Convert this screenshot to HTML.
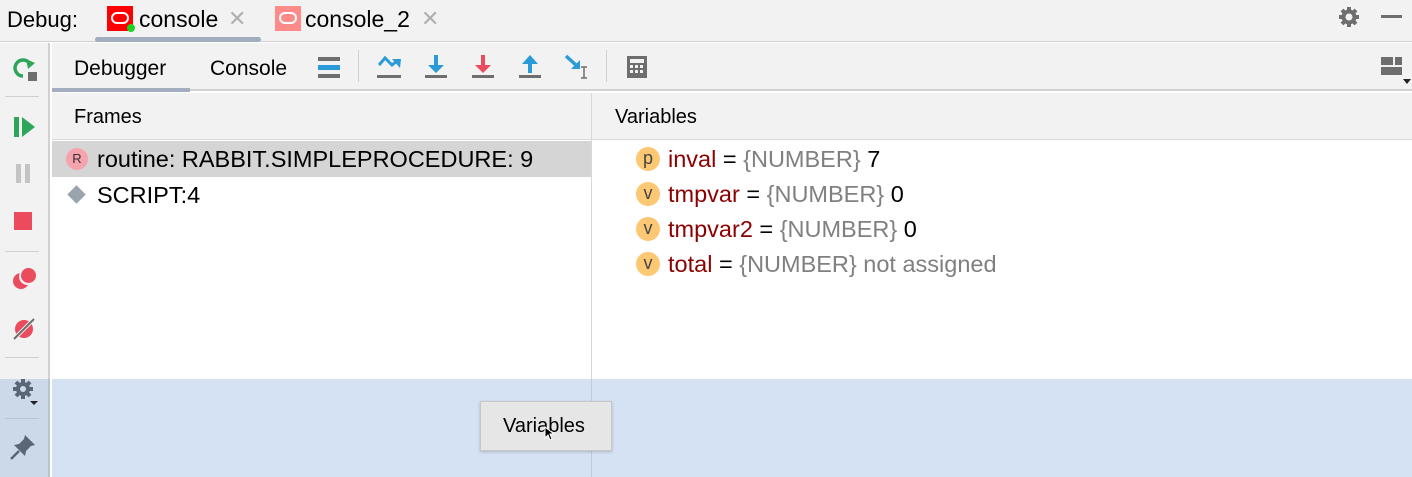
<!DOCTYPE html>
<html><head><style>
*{margin:0;padding:0;box-sizing:border-box}
body{width:1412px;height:477px;overflow:hidden;background:#fff;font-family:"Liberation Sans",sans-serif;position:relative;color:#000}
.a{position:absolute}
.t{font-size:22px;white-space:nowrap}
.v{font-size:23.5px}
</style></head><body>
<div class="a" style="left:0;top:0;width:1412px;height:42px;background:#f2f2f2;border-bottom:1px solid #d0d0d0"></div>
<div class="a t" style="left:7px;top:7px">Debug:</div>
<div class="a" style="left:107px;top:6px;width:26px;height:25px;background:#f00"></div>
<div class="a" style="left:111px;top:12px;width:18px;height:12px;border:2.5px solid #fff;border-radius:6px"></div>
<div class="a" style="left:127px;top:24px;width:8px;height:8px;background:#1ed31e;border-radius:50%"></div>
<div class="a t" style="left:139px;top:6px;font-size:23px">console</div>
<div class="a t" style="left:228px;top:6px;color:#b0b0b0">✕</div>
<div class="a" style="top:37px;height:5px;background:#a2adbf;border-radius:3px;left:95px;width:166px"></div>
<div class="a" style="left:275px;top:6px;width:26px;height:25px;background:#ff8a8a"></div>
<div class="a" style="left:279px;top:12px;width:18px;height:12px;border:2.5px solid #fff;border-radius:6px"></div>
<div class="a t" style="left:305px;top:6px;font-size:23px">console_2</div>
<div class="a t" style="left:421px;top:6px;color:#b0b0b0">✕</div>
<svg class="a" style="left:1337px;top:5px" width="24" height="24" viewBox="0 0 24 24"><g fill="#6e6e6e"><circle cx="12" cy="12" r="7.5"/><g stroke="#6e6e6e" stroke-width="4"><line x1="12" y1="2" x2="12" y2="22"/><line x1="2" y1="12" x2="22" y2="12"/><line x1="5" y1="5" x2="19" y2="19"/><line x1="19" y1="5" x2="5" y2="19"/></g></g><circle cx="12" cy="12" r="3.5" fill="#f2f2f2"/></svg>
<div class="a" style="left:1381px;top:15px;width:21px;height:3px;background:#6e6e6e"></div>
<div class="a" style="left:0;top:43px;width:50px;height:434px;background:#f2f2f2;border-right:2px solid #d0d0d0"></div>
<div class="a" style="left:0;top:379px;width:50px;height:98px;background:#cbd9e8;border-right:2px solid #b8c4d2"></div>
<svg class="a" style="left:10px;top:54px" width="30" height="30" viewBox="0 0 30 30"><path d="M13 22 A8 8 0 1 1 20 10" fill="none" stroke="#2fa55a" stroke-width="3.5"/><path d="M16 5 L25 9 L18 15Z" fill="#2fa55a"/><rect x="18" y="18" width="9" height="9" fill="#6e6e6e"/></svg>
<div class="a" style="left:5px;top:96px;width:34px;height:1px;background:#d0d0d0"></div>
<svg class="a" style="left:12px;top:115px" width="26" height="24"><rect x="2" y="2" width="5" height="20" fill="#2fa55a"/><path d="M10 2 L23 12 L10 22Z" fill="#2fa55a"/></svg>
<div class="a" style="left:16px;top:164px;width:5px;height:19px;background:#c4c4c4"></div><div class="a" style="left:25px;top:164px;width:5px;height:19px;background:#c4c4c4"></div>
<div class="a" style="left:14px;top:212px;width:18px;height:18px;background:#eb4b5c"></div>
<div class="a" style="left:5px;top:251px;width:34px;height:1px;background:#d0d0d0"></div>
<div class="a" style="left:13px;top:273px;width:16px;height:16px;background:#eb4b5c;border-radius:50%"></div><div class="a" style="left:21px;top:268px;width:15px;height:15px;background:#eb4b5c;border-radius:50%;box-shadow:-1px 1px 0 1px #f2f2f2"></div>
<svg class="a" style="left:11px;top:316px" width="26" height="26"><circle cx="13" cy="13" r="9" fill="#eb4b5c"/><line x1="3" y1="23" x2="23" y2="3" stroke="#f2f2f2" stroke-width="4"/><line x1="3" y1="23" x2="23" y2="3" stroke="#6e6e6e" stroke-width="2"/></svg>
<div class="a" style="left:5px;top:357px;width:34px;height:1px;background:#d0d0d0"></div>
<svg class="a" style="left:10px;top:376px" width="32" height="32" viewBox="0 0 32 32"><g transform="translate(13 13)"><circle r="7" fill="#5a6575"/><g stroke="#5a6575" stroke-width="4"><line y1="-10" y2="10"/><line x1="-10" x2="10"/><line x1="-7" y1="-7" x2="7" y2="7"/><line x1="7" y1="-7" x2="-7" y2="7"/></g><circle r="3" fill="#cbd9e8"/></g><path d="M20 25 L28 25 L24 29Z" fill="#222"/></svg>
<div class="a" style="left:5px;top:418px;width:34px;height:1px;background:#b8c4d2"></div>
<svg class="a" style="left:9px;top:433px" width="28" height="28"><path d="M16 2 L26 12 L22 13 L17 18 L16 23 L5 12 L10 11 L15 6Z" fill="#5a6575"/><line x1="2" y1="26" x2="10" y2="18" stroke="#5a6575" stroke-width="2.5"/></svg>
<div class="a" style="left:52px;top:43px;width:1360px;height:48px;background:#f2f2f2;border-bottom:2px solid #d0d0d0"></div>
<div class="a t" style="left:74px;top:57px;font-size:21px">Debugger</div>
<div class="a" style="left:52px;top:88px;width:138px;height:4px;background:#a2adbf"></div>
<div class="a t" style="left:210px;top:57px;font-size:21px">Console</div>
<svg class="a" style="left:316px;top:55px" width="26" height="24"><rect x="2" y="2" width="22" height="4" fill="#6e6e6e"/><rect x="2" y="10" width="22" height="5" fill="#2a9bd8"/><rect x="2" y="19" width="22" height="4" fill="#6e6e6e"/></svg>
<div class="a" style="left:358px;top:50px;width:1px;height:32px;background:#d0d0d0"></div>
<svg class="a" style="left:376px;top:54px" width="28" height="26"><path d="M3 11 L9 4 L16 11 L21 7" fill="none" stroke="#2a9bd8" stroke-width="3"/><path d="M16 5 L25 5 L24 14Z" fill="#2a9bd8"/><rect x="1" y="21" width="24" height="3" fill="#6e6e6e"/></svg>
<svg class="a" style="left:423px;top:54px" width="26" height="26"><rect x="11" y="1" width="4" height="11" fill="#2a9bd8"/><path d="M5 11 L21 11 L13 19Z" fill="#2a9bd8"/><rect x="2" y="21" width="22" height="3" fill="#6e6e6e"/></svg>
<svg class="a" style="left:470px;top:54px" width="26" height="26"><rect x="11" y="1" width="4" height="11" fill="#eb4b5c"/><path d="M5 11 L21 11 L13 19Z" fill="#eb4b5c"/><rect x="2" y="21" width="22" height="3" fill="#6e6e6e"/></svg>
<svg class="a" style="left:517px;top:54px" width="26" height="26"><rect x="11" y="8" width="4" height="11" fill="#2a9bd8"/><path d="M5 10 L21 10 L13 1Z" fill="#2a9bd8"/><rect x="2" y="21" width="22" height="3" fill="#6e6e6e"/></svg>
<svg class="a" style="left:564px;top:54px" width="28" height="26"><line x1="2" y1="2" x2="13" y2="12" stroke="#2a9bd8" stroke-width="3.5"/><path d="M7 15 L16 15 L16 6Z" fill="#2a9bd8"/><path d="M17 13 H23 M20 13 V24 M17 24 H23" stroke="#6e6e6e" stroke-width="1.5" fill="none"/></svg>
<div class="a" style="left:606px;top:50px;width:1px;height:32px;background:#d0d0d0"></div>
<svg class="a" style="left:626px;top:55px" width="22" height="24"><rect x="1" y="1" width="20" height="22" fill="#6e6e6e"/><rect x="4" y="4" width="14" height="4" fill="#f2f2f2"/><g fill="#f2f2f2"><rect x="4" y="10" width="3" height="3"/><rect x="9" y="10" width="3" height="3"/><rect x="14" y="10" width="3" height="3"/><rect x="4" y="15" width="3" height="3"/><rect x="9" y="15" width="3" height="3"/><rect x="14" y="15" width="3" height="3"/></g></svg>
<svg class="a" style="left:1380px;top:56px" width="32" height="32"><rect x="1" y="1" width="12" height="8" fill="#6e6e6e"/><rect x="15" y="1" width="7" height="8" fill="#6e6e6e"/><rect x="1" y="11" width="21" height="8" fill="#6e6e6e"/><path d="M23 23 L31 23 L27 28Z" fill="#222"/></svg>
<div class="a" style="left:52px;top:93px;width:1360px;height:47px;background:#f2f2f2;border-bottom:1px solid #d8d8d8"></div>
<div class="a t" style="left:74px;top:106px;font-size:20px">Frames</div>
<div class="a t" style="left:615px;top:106px;font-size:20px">Variables</div>
<div class="a" style="left:591px;top:93px;width:1px;height:384px;background:#d8d8d8"></div>
<div class="a" style="left:52px;top:141px;width:539px;height:36px;background:#d5d5d5"></div>
<div class="a" style="left:66px;top:148px;width:22px;height:22px;border-radius:50%;background:#f5a3ad;font-size:13px;text-align:center;line-height:22px;color:#333">R</div>
<div class="a t v" style="left:97px;top:146px">routine: RABBIT.SIMPLEPROCEDURE: 9</div>
<div class="a" style="left:70px;top:188px;width:13px;height:13px;background:#9aa4ad;transform:rotate(45deg)"></div>
<div class="a t v" style="left:97px;top:182px">SCRIPT:4</div>
<div class="a" style="left:636px;top:147px;width:24px;height:24px;border-radius:50%;background:#fcc873;text-align:center;line-height:22px;font-size:18px;color:#444">p</div>
<div class="a t v" style="left:668px;top:146px"><span style="color:#8b0000">inval</span> = <span style="color:#808080">{NUMBER}</span> 7</div>
<div class="a" style="left:636px;top:182px;width:24px;height:24px;border-radius:50%;background:#fcc873;text-align:center;line-height:22px;font-size:18px;color:#444">v</div>
<div class="a t v" style="left:668px;top:181px"><span style="color:#8b0000">tmpvar</span> = <span style="color:#808080">{NUMBER}</span> 0</div>
<div class="a" style="left:636px;top:217px;width:24px;height:24px;border-radius:50%;background:#fcc873;text-align:center;line-height:22px;font-size:18px;color:#444">v</div>
<div class="a t v" style="left:668px;top:216px"><span style="color:#8b0000">tmpvar2</span> = <span style="color:#808080">{NUMBER}</span> 0</div>
<div class="a" style="left:636px;top:252px;width:24px;height:24px;border-radius:50%;background:#fcc873;text-align:center;line-height:22px;font-size:18px;color:#444">v</div>
<div class="a t v" style="left:668px;top:251px"><span style="color:#8b0000">total</span> = <span style="color:#808080">{NUMBER} not assigned</span></div>
<div class="a" style="left:52px;top:379px;width:1360px;height:98px;background:#d4e2f4"></div>
<div class="a" style="left:591px;top:379px;width:1px;height:98px;background:#c0ccd9"></div>
<div class="a" style="left:480px;top:401px;width:132px;height:50px;background:#e6e6e6;border:1px solid #c8c8c8;box-shadow:0 1px 3px rgba(0,0,0,.2)"></div>
<div class="a t" style="left:503px;top:415px;font-size:20px">Variables</div>
<svg class="a" style="left:544px;top:426px" width="12" height="16"><path d="M1 1 L1 12 L4 9 L6 14 L8 13 L6 8 L10 8Z" fill="#000" stroke="#fff" stroke-width="1"/></svg>
</body></html>
